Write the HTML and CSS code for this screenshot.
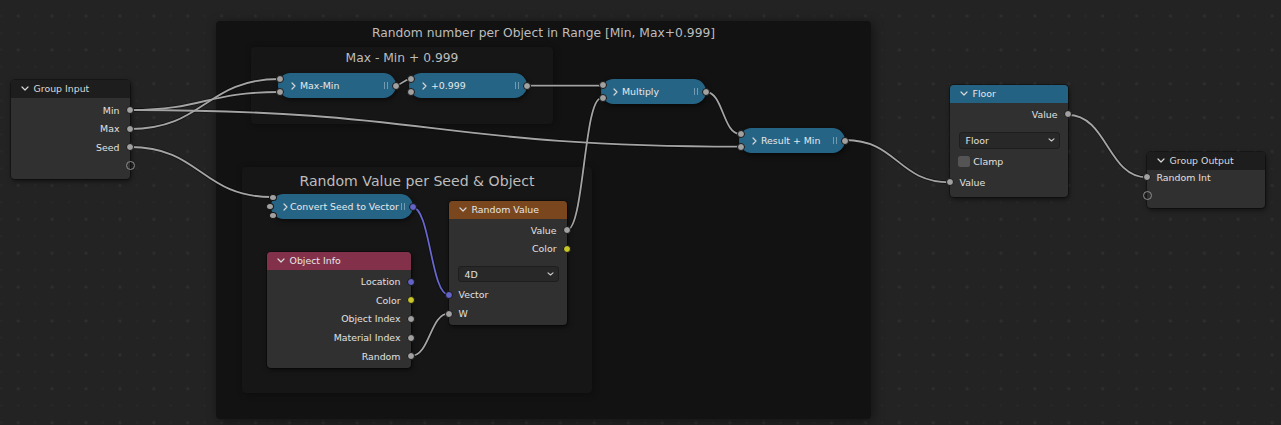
FILE: index.html
```html
<!DOCTYPE html>
<html lang="en">
<head>
<meta charset="utf-8">
<title>Node Editor</title>
<link rel="stylesheet" href="styles.css">
</head>
<body>
<div class="editor">
  <div class="frame f-outer"><div class="ftitle">Random number per Object in Range [Min, Max+0.999]</div></div>
  <div class="frame f-range"><div class="ftitle">Max - Min + 0.999</div></div>
  <div class="frame f-seed"><div class="ftitle big">Random Value per Seed &amp; Object</div></div>

  <svg class="links" width="1281" height="425" viewBox="0 0 1281 425">
    <defs>
      <path id="l1" d="M130,110 C205,110 205,92 280,92"/>
      <path id="l2" d="M130,129 C205,129 205,79 280,79"/>
      <path id="l3" d="M130,110 C435,110 435,146.7 740,146.7"/>
      <path id="l4" d="M130,147 C201,147 201,197 272,197"/>
      <path id="l5" d="M396,85 C403,85 403,79.3 410,79.3"/>
      <path id="l6" d="M527,85.7 C564,85.7 564,85.7 601,85.7"/>
      <path id="l7" d="M567,230 C584,230 584,98.3 601,98.3"/>
      <path id="l8" d="M706,92 C723,92 723,134 740,134"/>
      <path id="l9" d="M845,140 C897.5,140 897.5,182.3 950,182.3"/>
      <path id="l10" d="M1068,115 C1107.5,115 1107.5,177.3 1147,177.3"/>
      <path id="l11" d="M412,207 C430.5,207 430.5,295 449,295"/>
      <path id="l12" d="M411,356 C430,356 430,313.3 449,313.3"/>
    </defs>
    <g class="under">
      <use href="#l1"/><use href="#l2"/><use href="#l3"/><use href="#l4"/><use href="#l5"/><use href="#l6"/>
      <use href="#l7"/><use href="#l8"/><use href="#l9"/><use href="#l10"/><use href="#l11"/><use href="#l12"/>
    </g>
    <g class="wire">
      <use href="#l1"/><use href="#l2"/><use href="#l3"/><use href="#l4"/><use href="#l5"/><use href="#l6"/>
      <use href="#l7"/><use href="#l8"/><use href="#l9"/><use href="#l10"/><use href="#l12"/>
    </g>
    <g class="wire vecwire"><use href="#l11"/></g>
  </svg>

  <!-- Group Input -->
  <div class="node n-gin">
    <div class="hdr h-dark"><svg class="chev" width="8" height="5" viewBox="0 0 8 5"><path d="M1 1 L4 4 L7 1"/></svg><span>Group Input</span></div>
    <div class="body b-out">
      <div class="row out">Min<i class="sock"></i></div>
      <div class="row out">Max<i class="sock"></i></div>
      <div class="row out">Seed<i class="sock"></i></div>
      <div class="row out"><i class="sock virtual"></i></div>
    </div>
  </div>

  <!-- collapsed math nodes -->
  <div class="pill p-maxmin">
    <div class="ins"><i class="sock"></i><i class="sock"></i></div>
    <svg class="pchev" width="5" height="8" viewBox="0 0 5 8"><path d="M1 1 L4 4 L1 7"/></svg><span>Max-Min</span>
    <i class="grip"></i><i class="sock po"></i>
  </div>
  <div class="pill p-add">
    <div class="ins"><i class="sock"></i><i class="sock"></i></div>
    <svg class="pchev" width="5" height="8" viewBox="0 0 5 8"><path d="M1 1 L4 4 L1 7"/></svg><span>+0.999</span>
    <i class="grip"></i><i class="sock po"></i>
  </div>
  <div class="pill p-mul">
    <div class="ins"><i class="sock"></i><i class="sock"></i></div>
    <svg class="pchev" width="5" height="8" viewBox="0 0 5 8"><path d="M1 1 L4 4 L1 7"/></svg><span>Multiply</span>
    <i class="grip"></i><i class="sock po"></i>
  </div>
  <div class="pill p-res">
    <div class="ins"><i class="sock"></i><i class="sock"></i></div>
    <svg class="pchev" width="5" height="8" viewBox="0 0 5 8"><path d="M1 1 L4 4 L1 7"/></svg><span>Result + Min</span>
    <i class="grip"></i><i class="sock po"></i>
  </div>
  <div class="pill p-conv">
    <div class="ins ins3"><i class="sock"></i><i class="sock mid"></i><i class="sock"></i></div>
    <svg class="pchev" width="5" height="8" viewBox="0 0 5 8"><path d="M1 1 L4 4 L1 7"/></svg><span>Convert Seed to Vector</span>
    <i class="grip"></i><i class="sock po vec"></i>
  </div>

  <!-- Object Info -->
  <div class="node n-obj">
    <div class="hdr h-input"><svg class="chev" width="8" height="5" viewBox="0 0 8 5"><path d="M1 1 L4 4 L7 1"/></svg><span>Object Info</span></div>
    <div class="body b-obj">
      <div class="row out">Location<i class="sock vec"></i></div>
      <div class="row out">Color<i class="sock col"></i></div>
      <div class="row out">Object Index<i class="sock"></i></div>
      <div class="row out">Material Index<i class="sock"></i></div>
      <div class="row out">Random<i class="sock"></i></div>
    </div>
  </div>

  <!-- Random Value -->
  <div class="node n-rand">
    <div class="hdr h-tex"><svg class="chev" width="8" height="5" viewBox="0 0 8 5"><path d="M1 1 L4 4 L7 1"/></svg><span>Random Value</span></div>
    <div class="body b-rand">
      <div class="row out">Value<i class="sock"></i></div>
      <div class="row out">Color<i class="sock col"></i></div>
      <div class="select s-rand"><span>4D</span><svg class="schev" width="7" height="4" viewBox="0 0 7 4"><path d="M1 0.8 L3.5 3 L6 0.8"/></svg></div>
      <div class="row in r-vec">Vector<i class="sock vec"></i></div>
      <div class="row in">W<i class="sock"></i></div>
    </div>
  </div>

  <!-- Floor -->
  <div class="node n-floor">
    <div class="hdr h-conv"><svg class="chev" width="8" height="5" viewBox="0 0 8 5"><path d="M1 1 L4 4 L7 1"/></svg><span>Floor</span></div>
    <div class="body b-floor">
      <div class="row out">Value<i class="sock"></i></div>
      <div class="select s-floor"><span>Floor</span><svg class="schev" width="7" height="4" viewBox="0 0 7 4"><path d="M1 0.8 L3.5 3 L6 0.8"/></svg></div>
      <div class="row check"><i class="box"></i><span>Clamp</span></div>
      <div class="row in r-fin">Value<i class="sock"></i></div>
    </div>
  </div>

  <!-- Group Output -->
  <div class="node n-gout">
    <div class="hdr h-dark"><svg class="chev" width="8" height="5" viewBox="0 0 8 5"><path d="M1 1 L4 4 L7 1"/></svg><span>Group Output</span></div>
    <div class="body b-gout">
      <div class="row in">Random Int<i class="sock"></i></div>
      <div class="row in"><i class="sock virtual"></i></div>
    </div>
  </div>
</div>
</body>
</html>
```

FILE: styles.css
```css
html, body {
  margin: 0;
  padding: 0;
  background: #232323;
}

.editor {
  position: relative;
  width: 1281px;
  height: 425px;
  overflow: hidden;
  background-color: #232323;
  background-image:
    radial-gradient(circle, #2e2e2e 0 1.3px, rgba(46,46,46,0) 1.8px),
    radial-gradient(circle, #282828 0 1px, rgba(40,40,40,0) 1.4px);
  background-size: 33.9px 33.9px, 16.95px 16.95px;
  background-position: 1.35px -0.95px, 9.8px 7.5px;
  font-family: "DejaVu Sans", "Liberation Sans", sans-serif;
  font-size: 9.4px;
  color: #e2e2e2;
}

/* ---------- frames ---------- */
.frame {
  position: absolute;
  border-radius: 4px;
  box-sizing: border-box;
}
.f-outer {
  left: 216px;
  top: 21px;
  width: 655px;
  height: 398px;
  background: #121212;
  box-shadow: 2px 2px 12px rgba(0, 0, 0, 0.45);
}
.f-range {
  left: 251px;
  top: 47px;
  width: 302px;
  height: 77px;
  background: #161616;
  box-shadow: 1px 1px 6px rgba(0, 0, 0, 0.35);
}
.f-seed {
  left: 242px;
  top: 167px;
  width: 350px;
  height: 226px;
  background: #161616;
  box-shadow: 1px 1px 6px rgba(0, 0, 0, 0.35);
}
.ftitle {
  text-align: center;
  font-size: 12.3px;
  line-height: 14px;
  padding-top: 5px;
  color: #bdbdbd;
  white-space: nowrap;
}
.f-range .ftitle {
  padding-top: 4px;
}
.ftitle.big {
  font-size: 14.1px;
  line-height: 16px;
  padding-top: 6px;
}

/* ---------- links ---------- */
.links {
  position: absolute;
  left: 0;
  top: 0;
}
.links path {
  fill: none;
}
.under use {
  fill: none;
  stroke: rgba(0, 0, 0, 0.45);
  stroke-width: 3.4;
}
.wire use {
  fill: none;
  stroke: #a4a4a4;
  stroke-width: 1.8;
}
.vecwire use {
  stroke: #6767cc;
}

/* ---------- nodes ---------- */
.node {
  position: absolute;
  background: #303030;
  border-radius: 4px;
  box-shadow: 0 0 0 1px rgba(0, 0, 0, 0.3), 1px 2px 5px rgba(0, 0, 0, 0.55);
}
.n-gin { left: 11px; top: 80px; width: 119px; }
.n-obj { left: 267px; top: 252px; width: 144px; }
.n-rand { left: 449px; top: 201px; width: 118px; }
.n-floor { left: 950px; top: 85px; width: 118px; }
.n-gout { left: 1147px; top: 152px; width: 118px; }

.hdr {
  height: 17.5px;
  display: flex;
  align-items: center;
  gap: 4.5px;
  padding-left: 10px;
  border-radius: 4px 4px 0 0;
  color: #e6e6e6;
  white-space: nowrap;
}
.h-dark { background: #1d1d1d; color: #d9d9d9; }
.h-input { background: #83314a; }
.h-tex { background: #79461d; }
.h-conv { background: #246283; }

.chev path, .pchev path, .schev path {
  fill: none;
  stroke: #d6d6d6;
  stroke-width: 1.2;
  stroke-linecap: round;
  stroke-linejoin: round;
}
.chev { flex: none; }

.body { display: flex; flex-direction: column; }
.b-out { padding: 3.2px 0 3.5px; }
.b-obj { padding: 2.9px 0 2.7px; }
.b-rand { padding: 2.2px 0 2px; }
.b-floor { padding: 2.5px 0 5px; }
.b-gout { margin-top: -1.5px; padding-bottom: 3px; }

.row {
  position: relative;
  height: 18.65px;
  display: flex;
  align-items: center;
  white-space: nowrap;
  color: #e0e0e0;
}
.row.out {
  justify-content: flex-end;
  padding-right: 10.5px;
}
.row.in {
  padding-left: 9.5px;
}
.r-vec { margin-top: 3.2px; }
.r-fin { margin-top: 2.2px; }

.sock {
  position: absolute;
  top: 50%;
  width: 6px;
  height: 6px;
  margin-top: -4px;
  border-radius: 50%;
  background: #a1a1a1;
  border: 1px solid #161616;
}
.out .sock { right: -4px; }
.in .sock { left: -4px; }
.sock.vec { background: #6363c7; }
.sock.col { background: #c7c729; }
.sock.virtual {
  width: 7px;
  height: 7px;
  margin-top: -4.5px;
  background: transparent;
  border: 1px solid #8e8e8e;
}
.out .sock.virtual { right: -4.5px; }
.in .sock.virtual { left: -4.5px; }

/* dropdown */
.select {
  margin: 8px 8.5px 0;
  height: 16.5px;
  box-sizing: border-box;
  border-radius: 3px;
  background: #282828;
  border: 1px solid #1e1e1e;
  display: flex;
  align-items: center;
  justify-content: space-between;
  padding: 0 4px 0 6px;
  color: #e0e0e0;
}
.s-floor { margin-top: 8.5px; }
.schev path { stroke: #cfcfcf; stroke-width: 1.1; }

/* checkbox */
.row.check {
  margin-top: 3.5px;
  padding-left: 8.3px;
  gap: 3.3px;
}
.box {
  width: 11.7px;
  height: 11.7px;
  border-radius: 2.5px;
  background: #545454;
}

/* ---------- collapsed nodes ---------- */
.pill {
  position: absolute;
  height: 25px;
  border-radius: 12.5px;
  background: #266486;
  box-shadow: 1px 2px 5px rgba(0, 0, 0, 0.55);
  display: flex;
  align-items: center;
  gap: 4px;
  padding-left: 13px;
  box-sizing: border-box;
  color: #e8e8e8;
  white-space: nowrap;
}
.p-maxmin { left: 278px; top: 73px; width: 118px; }
.p-add { left: 409px; top: 73px; width: 118px; }
.p-mul { left: 601px; top: 79px; width: 105px; padding-left: 12px; }
.p-res { left: 739px; top: 128px; width: 106px; }
.p-conv { left: 271px; top: 194px; width: 142px; padding-left: 11.5px; gap: 2.5px; }

.pchev { flex: none; }

.ins {
  position: absolute;
  left: -2px;
  top: 0;
  bottom: 0;
  display: flex;
  flex-direction: column;
  justify-content: center;
  gap: 5px;
}
.ins .sock {
  position: static;
  margin: 0;
}
.ins3 { gap: 1.5px; }
.ins .sock.mid { margin-left: -3px; }

.sock.po {
  right: -4px;
}

.grip {
  position: absolute;
  right: 8.5px;
  top: 50%;
  width: 2px;
  height: 7px;
  margin-top: -3.5px;
  border-left: 1px solid rgba(210, 220, 230, 0.45);
  border-right: 1px solid rgba(210, 220, 230, 0.45);
}
```
